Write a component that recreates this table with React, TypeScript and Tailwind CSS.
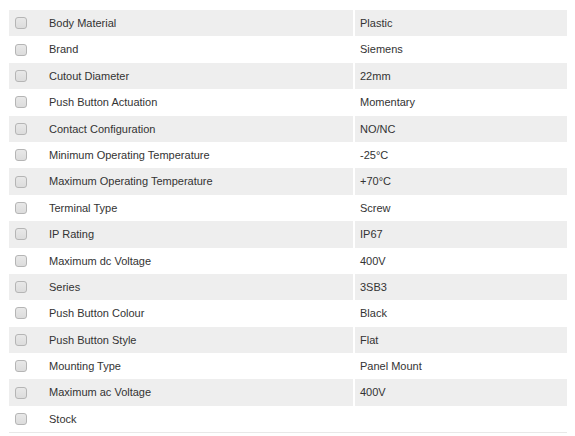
import React from "react";

const rows: [string, string][] = [
  ["Body Material", "Plastic"],
  ["Brand", "Siemens"],
  ["Cutout Diameter", "22mm"],
  ["Push Button Actuation", "Momentary"],
  ["Contact Configuration", "NO/NC"],
  ["Minimum Operating Temperature", "-25°C"],
  ["Maximum Operating Temperature", "+70°C"],
  ["Terminal Type", "Screw"],
  ["IP Rating", "IP67"],
  ["Maximum dc Voltage", "400V"],
  ["Series", "3SB3"],
  ["Push Button Colour", "Black"],
  ["Push Button Style", "Flat"],
  ["Mounting Type", "Panel Mount"],
  ["Maximum ac Voltage", "400V"],
  ["Stock", ""],
];

export default function App() {
  return (
    <div
      className="bg-white w-[575px] h-[436px] pt-[10px] pl-[9px]"
      style={{ fontFamily: '"Liberation Sans", Arial, sans-serif' }}
    >
      <div className="w-[558px] border-b border-[#e8e8e8]">
        {rows.map(([k, v], i) => (
          <div
            key={i}
            className={`grid grid-cols-[40px_304px_214px] h-[26.4px] text-[11px] leading-[14.4px] text-[#333] ${
              i % 2 === 0 ? "bg-[#eeeeee]" : "bg-white"
            }`}
          >
            <div className="flex items-center pl-[6px]">
              <div className="w-[12px] h-[12px] rounded-[3px] border border-[#b5b5b5] bg-gradient-to-b from-[#e8e8e8] to-[#dcdcdc]" />
            </div>
            <div className="flex items-center">{k}</div>
            <div className="flex items-center pl-[5px] border-l-2 border-white">{v}</div>
          </div>
        ))}
      </div>
    </div>
  );
}
